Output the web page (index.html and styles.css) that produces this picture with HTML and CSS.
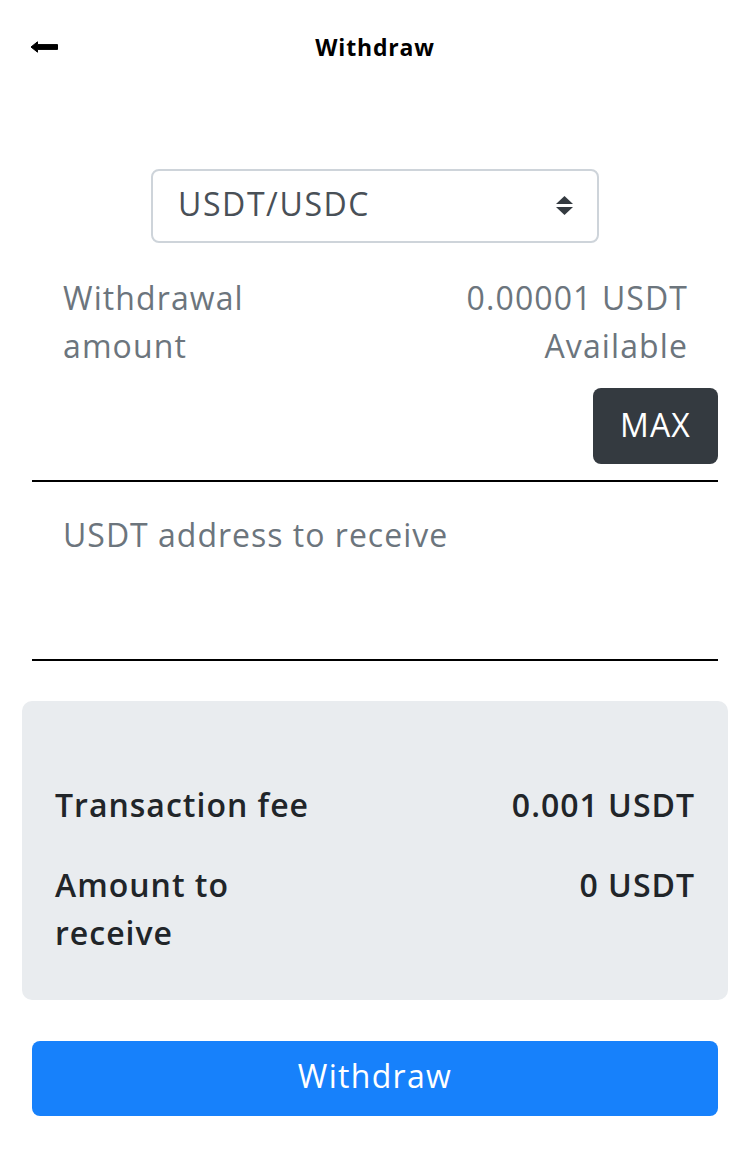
FILE: index.html
```html
<!DOCTYPE html>
<html lang="en">
<head>
<meta charset="utf-8">
<title>Withdraw</title>
<link rel="stylesheet" href="styles.css">
</head>
<body>
<header class="topbar">
  <button class="back" aria-label="Back">
    <svg width="28" height="12" viewBox="0 0 28 12"><path d="M1 6 L7.5 0.8 L7.5 3.6 L27.5 3.6 L27.5 8.4 L7.5 8.4 L7.5 11.2 Z" fill="#000" stroke="#000" stroke-width="1" stroke-linejoin="round"/></svg>
  </button>
  <h1 class="title">Withdraw</h1>
</header>
<main class="content">
  <div class="select-wrap">
    <div class="select">
      <span class="select-value">USDT/USDC</span>
      <svg class="select-caret" width="17" height="20" viewBox="0 0 17 20"><path d="M8.5 0 L17 8 L0 8 Z M0 11 L17 11 L8.5 19 Z" fill="#343a40"/></svg>
    </div>
  </div>
  <div class="amount-row">
    <div class="label">Withdrawal<br>amount</div>
    <div class="avail">0.00001 USDT<br>Available</div>
  </div>
  <div class="amount-input">
    <div class="input-space"></div>
    <button class="max">MAX</button>
  </div>
  <div class="address">USDT address to receive</div>
  <section class="summary">
    <div class="sum-row">
      <div class="sum-label">Transaction fee</div>
      <div class="sum-value">0.001 USDT</div>
    </div>
    <div class="sum-row">
      <div class="sum-label">Amount to<br>receive</div>
      <div class="sum-value">0 USDT</div>
    </div>
  </section>
  <button class="submit">Withdraw</button>
</main>
</body>
</html>
```
FILE: styles.css
```css
* { box-sizing: border-box; }
html, body { margin: 0; padding: 0; background: #fff; }
body {
  font-family: "Open Sans", "Liberation Sans", sans-serif;
  color: #212529;
  width: 750px;
}
.topbar {
  position: relative;
  height: 96px;
  display: flex;
  align-items: center;
  justify-content: center;
}
.back {
  position: absolute;
  left: 30px;
  top: 41px;
  border: 0;
  background: none;
  padding: 0;
  display: flex;
}
.title {
  margin: 0;
  font-size: 23px;
  font-weight: 700;
  letter-spacing: 0.8px;
  color: #000;
  line-height: 30px;
  margin-top: -2px;
}
.content {
  padding: 0 32px;
}
.select-wrap {
  display: flex;
  justify-content: center;
  margin-top: 73px;
}
.select {
  width: 448px;
  height: 74px;
  border: 2px solid #ced4da;
  border-radius: 8px;
  display: flex;
  align-items: center;
  justify-content: space-between;
  padding: 0 24px 0 25px;
}
.select-value {
  font-size: 32px;
  letter-spacing: 1.6px;
  color: #495057;
  line-height: 44px;
  margin-top: -4px;
}
.amount-row {
  margin-top: 31px;
  padding: 0 30px 0 31px;
  display: flex;
  justify-content: space-between;
  font-size: 32px;
  letter-spacing: 1.1px;
  line-height: 48px;
  color: #6c757d;
}
.avail { text-align: right; }
.amount-input {
  display: flex;
  padding-top: 18px;
  padding-bottom: 16px;
  border-bottom: 2px solid #000;
}
.input-space { flex: 1; }
.max {
  width: 125px;
  height: 76px;
  border: 0;
  border-radius: 8px;
  background: #343a40;
  color: #fff;
  font-family: inherit;
  font-size: 32px;
  letter-spacing: 1.2px;
  padding: 0 0 4px;
}
.address {
  height: 179px;
  padding: 29px 31px 0;
  font-size: 32px;
  letter-spacing: 1px;
  line-height: 48px;
  color: #6c757d;
  border-bottom: 2px solid #000;
}
.summary {
  margin: 40px -10px 0;
  background: #e9ecef;
  border-radius: 10px;
  padding: 80px 33px 43px;
  display: flex;
  flex-direction: column;
  gap: 32px;
}
.sum-row {
  display: flex;
  justify-content: space-between;
  font-size: 32px;
  font-weight: 600;
  letter-spacing: 1px;
  line-height: 48px;
  color: #212529;
}
.sum-value { text-align: right; }
.submit {
  display: block;
  width: 100%;
  height: 75px;
  margin-top: 41px;
  border: 0;
  border-radius: 8px;
  background: #1781fb;
  color: #fff;
  font-family: inherit;
  font-size: 32px;
  letter-spacing: 1.3px;
  padding: 0 0 6px;
}
```
